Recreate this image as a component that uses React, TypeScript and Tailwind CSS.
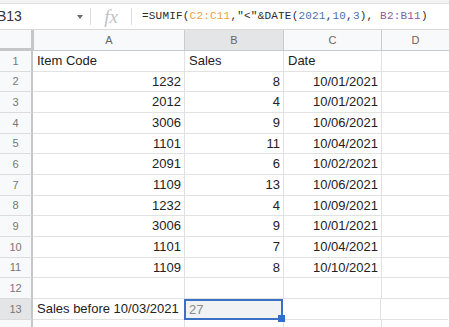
import React from 'react';

const rows: { a: string; b: string; c: string; label?: boolean }[] = [
  { a: 'Item Code', b: 'Sales', c: 'Date', label: true },
  { a: '1232', b: '8', c: '10/01/2021' },
  { a: '2012', b: '4', c: '10/01/2021' },
  { a: '3006', b: '9', c: '10/06/2021' },
  { a: '1101', b: '11', c: '10/04/2021' },
  { a: '2091', b: '6', c: '10/02/2021' },
  { a: '1109', b: '13', c: '10/06/2021' },
  { a: '1232', b: '4', c: '10/09/2021' },
  { a: '3006', b: '9', c: '10/01/2021' },
  { a: '1101', b: '7', c: '10/04/2021' },
  { a: '1109', b: '8', c: '10/10/2021' },
  { a: '', b: '', c: '' },
];

// row heights alternate so 13 rows span ~269px like the screenshot
const tall = [true, false, true, true, false, true, true, false, true, true, false, true, true];

export default function App() {
  return (
    <div className="w-[449px] h-[327px] overflow-hidden bg-white text-[#222] font-['Liberation_Sans',Arial,sans-serif]">
      {/* Formula bar */}
      <div className="h-[4px] bg-[#f3f3f3] border-b border-[#e0e0e0]" />
      <div className="h-[26px] flex items-center border-b border-[#d9d9d9]">
        <div className="w-[93px] flex items-center -ml-[3px]">
          <span className="text-[14px] text-[#333]">B13</span>
          <span className="ml-auto mr-[7px] w-0 h-0 border-l-[3px] border-r-[3px] border-t-[4px] border-l-transparent border-r-transparent border-t-[#6b6b6b]" />
        </div>
        <div className="w-px h-[17px] bg-[#dadce0]" />
        <div className="w-[40px] flex justify-center">
          <span className="text-[19px] italic text-[#c2c2c2] font-['Liberation_Serif',serif] leading-none">fx</span>
        </div>
        <div className="w-px h-[17px] bg-[#dadce0]" />
        <div className="pl-[10px] text-[11px] tracking-[0.2px] font-['Liberation_Mono',monospace] text-[#2a2a2a] whitespace-pre">
          =SUMIF(<span className="text-[#f09c4a]">C2:C11</span>,"&lt;"&amp;DATE(<span className="text-[#4a72ad]">2021</span>,<span className="text-[#4a72ad]">10</span>,<span className="text-[#4a72ad]">3</span>), <span className="text-[#8a5a9e]">B2:B11</span>)
        </div>
      </div>

      {/* Column headers */}
      <div className="flex h-[21px] text-[11px] text-[#666]">
        <div className="w-[34px] bg-[#f8f9fa] border-r-[3px] border-b-[3px] border-[#c4c6c8]" />
        <div className="w-[151px] bg-[#f8f9fa] border-r border-b border-[#c9cbcd] flex items-center justify-center">A</div>
        <div className="w-[99px] bg-[#e3e5e7] border-r border-b border-[#c9cbcd] flex items-center justify-center">B</div>
        <div className="w-[98px] bg-[#f8f9fa] border-r border-b border-[#c9cbcd] flex items-center justify-center">C</div>
        <div className="w-[67px] bg-[#f8f9fa] border-b border-[#c9cbcd] flex items-center justify-center">D</div>
      </div>

      {/* Data rows */}
      {rows.map((r, i) => (
        <div key={i} className={`flex text-[13px] ${tall[i] ? 'h-[21px]' : 'h-[20px]'}`}>
          <div className="w-[33px] bg-[#f8f9fa] border-r-2 border-b border-r-[#c4c6c8] border-b-[#dcdcdc] flex items-center justify-center text-[11px] text-[#777]">
            {i + 1}
          </div>
          <div className={`w-[152px] border-r border-b border-[#e2e2e2] flex items-center px-[3px] ${r.label ? 'justify-start pl-[4px]' : 'justify-end'}`}>
            {r.a}
          </div>
          <div className={`w-[99px] border-r border-b border-[#e2e2e2] flex items-center px-[3px] ${r.label ? 'justify-start pl-[4px]' : 'justify-end'}`}>
            {r.b}
          </div>
          <div className={`w-[98px] border-r border-b border-[#e2e2e2] flex items-center px-[3px] ${r.label ? 'justify-start pl-[4px]' : 'justify-end'}`}>
            {r.c}
          </div>
          <div className="w-[67px] border-b border-[#e2e2e2]" />
        </div>
      ))}

      {/* Row 13 with selected cell */}
      <div className="relative z-10 flex h-[21px] text-[13px]">
        <div className="w-[33px] bg-[#e3e5e7] border-r-2 border-b border-r-[#c4c6c8] border-b-[#dcdcdc] flex items-center justify-center text-[11px] text-[#777]">
          13
        </div>
        <div className="w-[152px] border-r border-b border-[#e2e2e2] flex items-center pl-[4px]">
          Sales before 10/03/2021
        </div>
        <div className="relative w-[99px] border-2 border-[#3b70c4] bg-[#f1f2f3] flex items-center pl-[3px] text-[#8a8a8a] -ml-px">
          27
          <span className="absolute z-20 -right-[4px] -bottom-[4px] w-[7px] h-[7px] bg-[#2f6fd0]" />
        </div>
        <div className="w-[98px] border-r border-b border-[#e2e2e2]" />
        <div className="w-[67px] border-b border-[#e2e2e2]" />
      </div>

      {/* Row 14 (partial) */}
      <div className="flex h-[21px]">
        <div className="w-[33px] bg-[#f8f9fa] border-r-2 border-r-[#c4c6c8]" />
        <div className="w-[152px] border-r border-[#e2e2e2]" />
        <div className="w-[99px] border-r border-[#e2e2e2]" />
        <div className="w-[98px] border-r border-[#e2e2e2]" />
        <div className="w-[67px]" />
      </div>
    </div>
  );
}
